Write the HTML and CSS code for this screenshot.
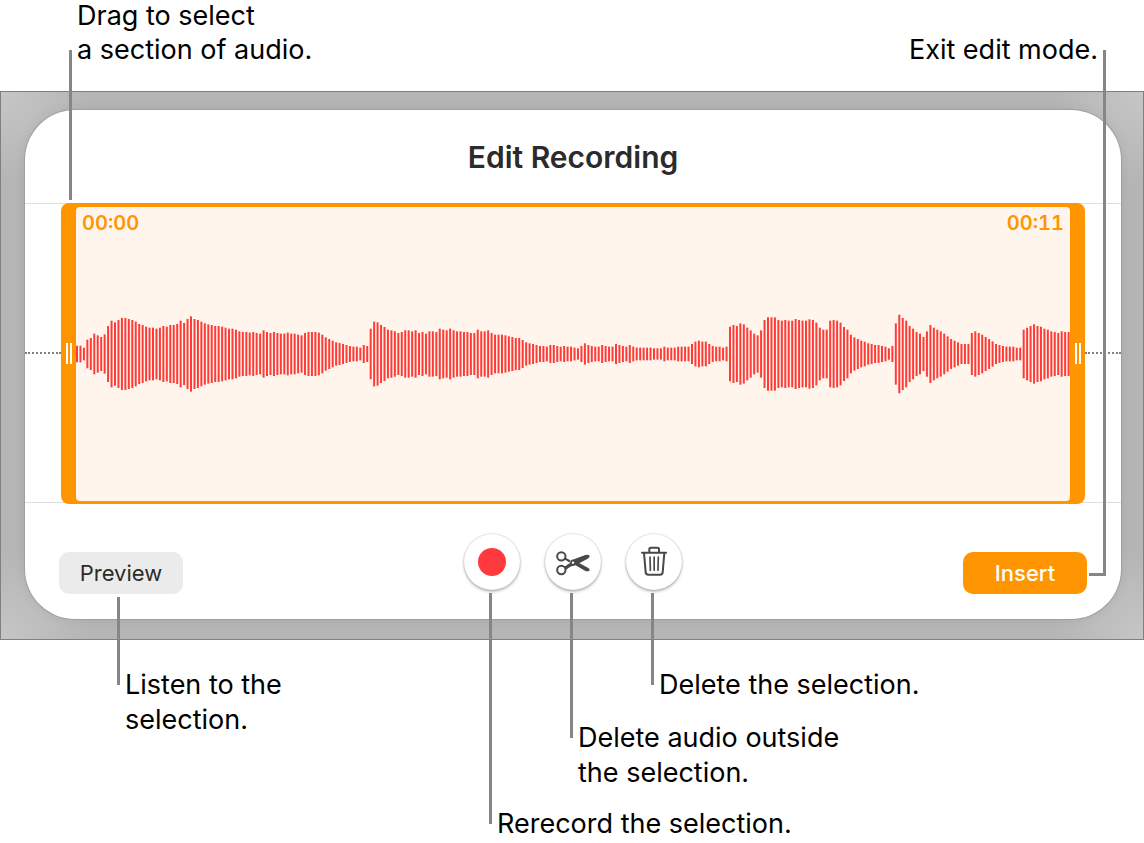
FILE: index.html
```html
<!DOCTYPE html>
<html lang="en">
<head>
    <meta charset="UTF-8">
    <meta name="viewport" content="width=device-width, initial-scale=1.0">
    <title>Edit Recording</title>
    <link rel="stylesheet" href="styles.css">
</head>
<body>
    <div class="notes">
        <p class="note note-select">Drag to select<br>a section of audio.</p>
        <p class="note note-exit">Exit edit mode.</p>
    </div>

    <main class="stage">
        <section class="card">
            <h1 class="title">Edit Recording</h1>

            <div class="track">
                <span class="dots"></span>
                <div class="selection">
                    <button class="handle" type="button" aria-label="Selection start"></button>
                    <div class="clip">
                        <div class="times">
                            <span>00:00</span>
                            <span>00:11</span>
                        </div>
                        <svg class="wave" viewBox="0 0 994 80" preserveAspectRatio="none" aria-hidden="true"></svg>
                    </div>
                    <button class="handle" type="button" aria-label="Selection end"></button>
                </div>
                <span class="dots"></span>
            </div>

            <div class="actions">
                <div class="item">
                    <button class="btn btn-preview" type="button">Preview</button>
                    <p class="note callout callout-preview">Listen to the<br>selection.</p>
                </div>
                <div class="tools">
                    <div class="item">
                        <button class="tool" type="button" aria-label="Rerecord"><span class="record"></span></button>
                        <p class="note callout callout-record">Rerecord the selection.</p>
                    </div>
                    <div class="item">
                        <button class="tool" type="button" aria-label="Trim">
                            <svg width="38" height="27" viewBox="0 0 114 81" fill="none" stroke="#484848" stroke-width="6" stroke-linecap="round">
                                <circle cx="22" cy="22" r="12.5"/>
                                <circle cx="22" cy="63" r="12.5"/>
                                <path d="M33 29L46 36"/>
                                <path d="M62 47L74 41L103 57Q109 61 106 65Q101 68 93 65Z" fill="#484848" stroke="none"/>
                                <path d="M31 53L48 42L49 37Q52 31 60 31L94 18Q103 16 107 20Q108 25 101 29L61 50Q54 50 49 53L36 62Z" fill="#484848" stroke="none"/>
                                <circle cx="57" cy="41" r="3.5" fill="#fff" stroke="none"/>
                            </svg>
                        </button>
                        <p class="note callout callout-trim">Delete audio outside<br>the selection.</p>
                    </div>
                    <div class="item">
                        <button class="tool" type="button" aria-label="Delete">
                            <svg width="28" height="32" viewBox="0 0 84 96" fill="none" stroke="#484848" stroke-width="6" stroke-linecap="round" stroke-linejoin="round">
                                <path d="M6 20H78M28 19V10Q28 5 33 5H52Q57 5 57 10V19"/>
                                <path d="M12 21L17 79Q18 86 25 86H60Q67 86 68 79L73 21"/>
                                <path d="M30 33L31 73M42.500 33V73M55 33L54 73" stroke-width="5"/>
                            </svg>
                        </button>
                        <p class="note callout callout-delete">Delete the selection.</p>
                    </div>
                </div>
                <div class="item item-end">
                    <button class="btn btn-insert" type="button">Insert</button>
                    <span class="exit-line"></span>
                </div>
            </div>
        </section>
    </main>

    <script>
        // loudness of each bar, one bar every 3.455 units
        var levels = [
            25,25,19,43,48,61,56,51,59,84,100,95,102,108,108,105,102,97,90,87,82,79,79,76,
            79,84,82,87,87,90,100,93,105,113,105,102,97,92,89,87,84,84,82,79,76,76,73,68,
            66,66,64,66,63,61,71,66,63,66,63,61,61,64,61,61,58,56,63,66,66,66,64,58,
            50,45,40,35,33,30,27,24,22,22,19,27,24,76,97,95,87,81,73,71,68,63,66,71,
            71,68,71,63,66,61,68,68,66,76,73,71,76,71,68,68,66,66,63,63,73,68,68,71,
            63,58,58,58,56,53,51,48,48,42,35,32,30,27,24,24,22,27,27,24,22,24,22,22,
            19,17,24,32,27,24,22,22,27,24,22,22,30,27,24,22,27,22,19,19,19,19,19,17,
            17,17,22,19,19,19,22,22,22,22,30,37,40,37,37,30,24,22,22,19,22,82,87,84,
            92,89,79,71,61,56,71,102,110,110,110,102,100,102,100,100,105,102,100,100,104,102,94,79,
            73,73,100,102,100,94,81,73,58,50,45,40,37,32,30,27,27,24,22,17,24,92,118,108,
            100,84,76,66,61,51,68,87,79,73,68,61,53,45,40,35,30,30,30,63,68,63,58,51,
            45,38,30,27,24,22,22,22,19,19,73,79,84,89,84,82,76,73,68,66,63,68,66,66
        ]
        var oWave = document.querySelector('.wave')

        levels.forEach(function (level, index) {
            var bar = document.createElementNS('http://www.w3.org/2000/svg', 'line')
            var x = 1 + index * 3.455
            bar.setAttribute('x1', x)
            bar.setAttribute('x2', x)
            bar.setAttribute('y1', 40 - level / 3)
            bar.setAttribute('y2', 40 + level / 3)
            oWave.appendChild(bar)
        })
    </script>
</body>
</html>
```
FILE: styles.css
```css
*{
    box-sizing: border-box;
    margin:0;
    padding:0;
}
body{
    min-height:100vh;
    background:#fff;
    color:#000;
    font-family: Inter, "Liberation Sans", sans-serif;
}
button{
    border:0;
    font-family: inherit;
}

/* notes around the window */
.note{
    font-size:27px;
    line-height:35px;
    white-space: nowrap;
}
.notes{
    position: relative;
    z-index: 1;
    display: flex;
    justify-content: space-between;
    align-items: flex-end;
    height:91px;
    padding:0 46px 24px 77px;
}
.notes .note{
    line-height:34px;
}
.note-select{
    position: relative;
}
.note-select::before{
    content:"";
    position: absolute;
    left:-8px;
    bottom:-133px;
    width:3px;
    height:150px;
    background:#868686;
}

.stage{
    padding:18px 22px 20px 24px;
    border:1px solid #808080;
    background:
        radial-gradient(circle at 0 0, #c6c6c6, transparent 90px),
        radial-gradient(circle at 100% 0, #c6c6c6, transparent 90px),
        radial-gradient(circle at 0 100%, #c6c6c6, transparent 90px),
        radial-gradient(circle at 100% 100%, #c6c6c6, transparent 90px),
        #b5b5b5;
}
.card{
    border-radius:50px;
    background:#fff;
    box-shadow:0 0 0 1px #a0a0a0, 0 0 12px rgba(0,0,0,.08);
}
.title{
    padding-top:27px;
    height:93px;
    color:#2b2b2b;
    font-size:30px;
    font-weight:600;
    line-height:40px;
    text-align: center;
}

/* waveform */
.track{
    display: flex;
    align-items: center;
    border-top:1px solid #ddd;
    border-bottom:1px solid #ddd;
}
.dots{
    width:36px;
    border-top:2px dotted #808080;
}
.selection{
    flex:1;
    display: flex;
    height:301px;
    margin:-1px 0 -2px;
    border-radius:8px;
    background:#ff9500;
}
.handle{
    display: flex;
    justify-content: center;
    align-items: center;
    gap:2px;
    width:15px;
    background: transparent;
    cursor: ew-resize;
}
.handle::before,
.handle::after{
    content:"";
    width:2px;
    height:21px;
    background:#fff;
}
.clip{
    flex:1;
    display: grid;
    margin:4px 0 3px;
    border-radius:4px;
    background:#fff5ec;
}
.times{
    grid-area:1 / 1;
    display: flex;
    justify-content: space-between;
    padding:4px 6px;
    color:#ff9500;
    font-size:20px;
    font-weight:600;
    font-variant-numeric: tabular-nums;
    line-height:24px;
}
.wave{
    grid-area:1 / 1;
    align-self: center;
    width:100%;
    height:80px;
    stroke:#ff3b38;
    stroke-width:2;
}

/* buttons */
.actions{
    display: grid;
    grid-template-columns:1fr auto 1fr;
    align-items: end;
    padding:31px 34px 25px;
}
.item{
    position: relative;
    justify-self: start;
}
.item-end{
    justify-self: end;
}
.btn{
    display: block;
    width:124px;
    height:42px;
    border-radius:10px;
    font-size:22px;
}
.btn-preview{
    background:#ebebeb;
    color:#2b2b2b;
}
.btn-insert{
    background:#ff9500;
    color:#fff;
    font-weight:500;
}
.tools{
    display: flex;
    gap:25px;
    padding-bottom:4px;
}
.tool{
    display: flex;
    justify-content: center;
    align-items: center;
    width:56px;
    height:56px;
    border-radius:50%;
    background:#fff;
    box-shadow:0 0 2px rgba(0,0,0,.25), 0 2px 3px rgba(0,0,0,.25);
}
.record{
    width:28px;
    height:28px;
    border-radius:50%;
    background:#ff3a3e;
}

/* notes hanging under a button, --drop is how far down the text starts */
.callout{
    position: absolute;
    top:calc(100% + 3px);
    left:25px;
    padding:var(--drop) 0 0 8px;
}
.callout::before{
    content:"";
    position: absolute;
    top:0;
    left:0;
    width:3px;
    height:calc(var(--drop) + 18px);
    background:#868686;
}
.callout-preview{
    --drop:70px;
    left:58px;
}
.callout-record{
    --drop:213px;
}
.callout-trim{
    --drop:127px;
}
.callout-delete{
    --drop:74px;
}
.exit-line{
    position: absolute;
    left:calc(100% + 2px);
    bottom:18px;
    width:17px;
    height:526px;
    border:solid #868686;
    border-width:0 3px 3px 0;
}
```
